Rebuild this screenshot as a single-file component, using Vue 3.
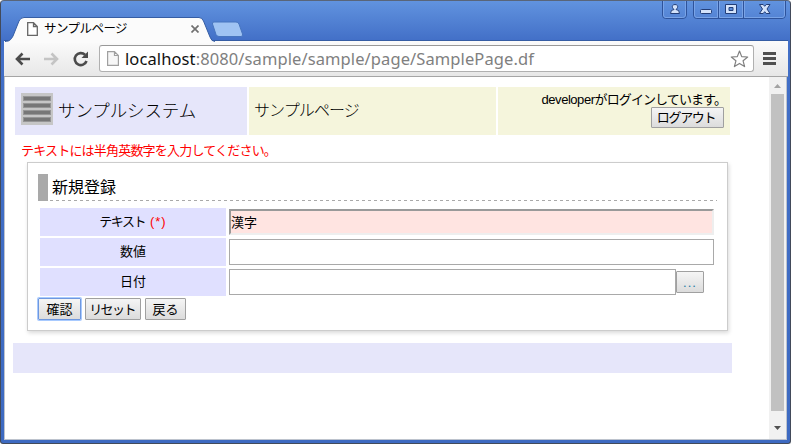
<script setup>
import { ref } from 'vue'

const text = ref('漢字')
const number = ref('')
const date = ref('')
</script>

<template>
  <div class="window">
    <header class="titlebar">
      <div class="tab">
        <svg class="tab-shape" width="212" height="26" viewBox="0 0 212 26">
          <path d="M0 24.5C4 24.5 6 23 8 19L14 4Q15.500 .5 19 .5H194Q197 .5 198.500 4L205 20Q206.500 24.500 210 24.500V26H0Z" fill="#fbfbfb" />
          <path d="M0 24.5C4 24.5 6 23 8 19L14 4Q15.500 .5 19 .5H194Q197 .5 198.500 4L205 20Q206.500 24.500 210 24.500" fill="none" stroke="#355da4" />
        </svg>
        <svg class="page-icon" width="11" height="14" viewBox="0 0 11 14"><path d="M.7.7H6.500L10.300 4.500V13.300H.7ZM6.500.7V4.500H10.300" fill="#fff" stroke="#666" stroke-width="1.3" /></svg>
        <span class="tab-title">サンプルページ</span>
        <svg class="tab-close" width="8" height="8" viewBox="0 0 8 8"><path d="M.5.5 7.500 7.500M7.500.5.5 7.500" stroke="#707070" stroke-width="1.7" /></svg>
      </div>
      <svg class="new-tab" width="33" height="17" viewBox="0 0 33 17"><path d="M3 1H25Q27 1 28 3L31.500 13Q32 15.500 30 15.500H8Q6 15.500 5 13.500L1.500 3Q1 1 3 1Z" fill="#9fc3f3" stroke="#4775bf" /></svg>
      <svg class="controls" width="126" height="19" viewBox="0 0 126 19">
        <g fill="none">
          <path d="M1.500 0V14Q1.500 17.500 4.500 17.500H22Q25.500 17.500 25.500 14V0M32.500 0V14Q32.500 17.500 35.500 17.500H121Q124.500 17.500 124.500 14V0M57.500 0V17M82.500 0V17" stroke="#2e539b" />
          <path d="M2.500 0V14Q2.500 16.500 5 16.500H21.500Q24.500 16.500 24.500 14V0M33.500 0V14Q33.500 16.500 36 16.500H56.500V0M58.500 0V16.500H81.500V0M83.500 0V16.500H121Q123.500 16.500 123.500 14V0" stroke="#79a3e6" />
        </g>
        <g fill="#d3e2fa" stroke="#233e78">
          <path d="M14 3.500C11.500 3.500 11 5.500 11.500 6.500Q12 7.500 13 8.500Q9.500 8.500 9.500 12.500H18.500Q18.500 8.500 15 8.500Q16 7.500 16.500 6.500C17 5.500 16.500 3.500 14 3.500Z" />
          <rect x="39.500" y="8.500" width="11" height="4" rx="1" />
          <path fill-rule="evenodd" d="M64.500 3.500H75.500V12.500H64.500ZM68 6.500V9.500H72V6.500Z" />
          <path d="M98.500 3.500H102.200L103.700 5.300 105.200 3.500H109L106 8 109 12.500H105.200L103.700 10.700 102.200 12.500H98.500L101.500 8Z" />
        </g>
      </svg>
    </header>

    <nav class="toolbar">
      <svg class="nav-icons" width="85" height="20" viewBox="0 0 85 20">
        <g fill="none" stroke-width="2.600">
          <path d="M25 10H12M17.500 4.500 12 10 17.500 15.500" stroke="#4b4b4b" />
          <path d="M39 10H52M46.500 4.500 52 10 46.500 15.500" stroke="#c4c4c4" />
          <path d="M80 5.800A6 6 0 1 0 81.500 12" stroke="#4b4b4b" />
        </g>
        <path d="M83 2.500V9H76.500Z" fill="#4b4b4b" />
      </svg>
      <div class="address">
        <svg width="12" height="15" viewBox="0 0 12 15"><path d="M.6.6H7.500L11.400 4.500V14.400H.6ZM7.500.6V4.500H11.400" fill="#f7f7f7" stroke="#a0a0a0" stroke-width="1.2" /></svg>
        <span class="url"><b>localhost</b>:8080/sample/sample/page/SamplePage.df</span>
        <svg class="star" width="19" height="18" viewBox="0 0 19 18"><path d="M9.500 1 11.700 6.600 17.700 7 13.100 10.800 14.600 16.600 9.500 13.400 4.400 16.600 5.900 10.800 1.300 7 7.300 6.600Z" fill="#fff" stroke="#808080" stroke-width="1.2" stroke-linejoin="round" /></svg>
      </div>
      <svg class="menu" width="13" height="13" viewBox="0 0 13 13"><path d="M0 0H13V3H0ZM0 5H13V8H0ZM0 10H13V13H0Z" fill="#505050" /></svg>
    </nav>

    <div class="viewport">
      <main class="page">
        <div class="page-header">
          <div class="system">
            <svg width="32" height="32" viewBox="0 0 32 32">
              <rect width="32" height="32" fill="#c6c6c6" />
              <g fill="#777" stroke="#969696"><rect x="2.500" y="3.500" width="27" height="4" /><rect x="2.500" y="10.500" width="27" height="4" /><rect x="2.500" y="17.500" width="27" height="4" /><rect x="2.500" y="24.500" width="27" height="4" /></g>
            </svg>
            <span class="system-name">サンプルシステム</span>
          </div>
          <div class="page-name"><span>サンプルページ</span></div>
          <div class="login">
            <span class="login-text"><i>developer</i>がログインしています。</span>
            <button class="btn logout"><span>ログアウト</span></button>
          </div>
        </div>
        <p class="error">テキストには半角英数字を入力してください。</p>
        <section class="panel">
          <h1><span>新規登録</span></h1>
          <div class="row">
            <label><span>テキスト</span><em>(*)</em></label>
            <input v-model="text" class="invalid" />
          </div>
          <div class="row">
            <label>数値</label>
            <input v-model="number" />
          </div>
          <div class="row">
            <label>日付</label>
            <input v-model="date" class="date" /><button class="btn picker">...</button>
          </div>
          <div class="actions">
            <button class="btn confirm">確認</button>
            <button class="btn reset"><span>リセット</span></button>
            <button class="btn back">戻る</button>
          </div>
        </section>
        <footer></footer>
      </main>
      <aside class="scrollbar">
        <svg width="7" height="4" viewBox="0 0 7 4"><path d="M0 4 3.500 0 7 4Z" fill="#a3a3a3" /></svg>
        <div class="thumb"></div>
        <svg width="7" height="4" viewBox="0 0 7 4"><path d="M0 0 3.500 4 7 0Z" fill="#505050" /></svg>
      </aside>
    </div>
  </div>
</template>

<style>
body { margin: 0; background: #fff; overflow: hidden; }
</style>

<style scoped>
* { box-sizing: border-box; }
.window {
  width: 791px; height: 444px; display: flex; flex-direction: column;
  padding: 0 3px 3px; border: 1px solid #424a5a; border-top-color: #596579; border-radius: 4px 4px 3px 3px;
  background: linear-gradient(#6193df, #426fc7 40px, #3d6ac1);
  font-family: "Liberation Sans", "Noto Sans CJK JP", sans-serif; font-size: 13px; color: #000;
}
.titlebar { height: 40px; flex: none; display: flex; align-items: flex-start; }
.tab { position: relative; z-index: 1; width: 212px; height: 24px; margin: 16px -6px 0 1px; display: flex; align-items: center; padding-left: 22px; }
.tab-shape { position: absolute; left: 0; top: 0; }
.page-icon, .tab-title, .tab-close { position: relative; }
.tab-title { width: 84px; margin-left: 6px; font-size: 12.500px; letter-spacing: -.55px; white-space: nowrap; line-height: 24px; }
.tab-close { margin-left: 63px; }
.new-tab { margin-top: 20px; }
.controls { margin: 0 0 0 auto; }
.toolbar {
  height: 36px; flex: none; display: flex; align-items: center; background: linear-gradient(#fbfbfb, #e7e7e7);
  border-bottom: 1px solid #a5a5a5; margin-right: -1px; box-shadow: 0 -1px #355da4;
}
.nav-icons { margin-left: 1px; }
.address { width: 655px; height: 27px; margin-left: 9px; display: flex; align-items: center; border: 1px solid #b0b0b0; border-top-color: #999; border-radius: 3px; background: #fff; padding: 0 4px 0 7px; }
.url { margin-left: 6px; font-family: "Noto Sans", sans-serif; font-size: 16.500px; line-height: 25px; letter-spacing: .1px; color: #808080; white-space: nowrap; }
.url b { font-weight: 400; color: #111; }
.star { margin-left: auto; }
.menu { margin-left: 9px; }
.viewport { height: 363px; display: flex; background: #fff; border: 1px solid #bdc3cd; border-top: 0; }
.page { flex: 1; padding: 10px 0 0 10px; min-width: 0; }
.page-header { width: 715px; height: 48px; display: grid; grid-template-columns: 232px 247px 232px; gap: 2px; }
.system { background: #e6e6fa; display: flex; padding: 6px; align-items: flex-start; }
.system-name { margin-left: 5px; font-size: 17.500px; font-weight: 300; line-height: 36px; white-space: nowrap; letter-spacing: -.1px; }
.page-name { background: #f5f5dc; padding-left: 5px; font-size: 16px; font-weight: 300; letter-spacing: -.9px; line-height: 48px; }
.login { background: #f5f5dc; padding: 4px 6px 0 0; display: flex; flex-direction: column; align-items: flex-end; }
.login-text { line-height: 18px; height: 16px; letter-spacing: -.9px; white-space: nowrap; margin-right: -2px; }
.login-text i { font-style: normal; letter-spacing: -.45px; }
.btn { font: inherit; line-height: 19px; padding: 0; text-align: center; border: 1px solid #a0a0a0; border-radius: 1px; background: linear-gradient(#f5f5f5, #dcdcdc); color: #000; white-space: nowrap; height: 22px; }
.logout { width: 73px; height: 21px; letter-spacing: -1.300px; line-height: 18px; padding-right: 3px; }
.error { margin: 5px 0 0 6px; color: #f00; height: 22px; line-height: 21px; letter-spacing: -.8px; white-space: nowrap; }
.panel { width: 701px; height: 169px; margin-left: 12px; border: 1px solid #ccc; padding: 11px 10px 0; box-shadow: 1px 2px 4px rgba(0, 0, 0, .15); }
h1 {
  margin: 0; height: 27px; border-left: 10px solid #a9a9a9; padding-left: 4px; font-size: 16px; font-weight: 400; line-height: 27px;
  background: repeating-linear-gradient(90deg, transparent 0 2px, #a9a9a9 2px 5px, transparent 5px 6px) left bottom / 100% 1px no-repeat;
}
.row { display: flex; height: 28px; margin: 0 0 2px 2px; align-items: center; }
h1 + .row { margin-top: 7px; }
label { width: 186px; height: 28px; line-height: 27px; background: #e0e0ff; text-align: center; margin-right: 3px; flex: none; }
label span { letter-spacing: -1.500px; }
label em { color: #f00; font-style: normal; margin-left: 5px; letter-spacing: 1px; }
input { width: 485px; height: 26px; flex: none; border: 1px solid #a9a9a9; padding: 0 1px; font: inherit; outline: 0; background: #fff; }
input.invalid { background: #ffe4e1; border: 2px solid; border-color: #999 #eee #eee #999; padding: 0 0 2px; }
input.date { width: 447px; }
.picker { width: 28px; color: #247ca5; letter-spacing: 1px; }
.actions { display: flex; gap: 4px; }
.confirm { width: 43px; border-color: #6f98df; box-shadow: 0 0 0 1px #a8caff; }
.reset { width: 56px; letter-spacing: -1.600px; padding-right: 2px; }
.back { width: 41px; }
footer { width: 719px; height: 30px; margin: 12px 0 0 -2px; background: #e6e6fa; }
.scrollbar { width: 17px; background: #f1f1f1; display: flex; flex-direction: column; align-items: center; padding: 7px 2px 9px 2px; }
.thumb { width: 13px; height: 317px; margin: 6px 0 auto; background: #c1c1c1; flex: none; }
</style>
